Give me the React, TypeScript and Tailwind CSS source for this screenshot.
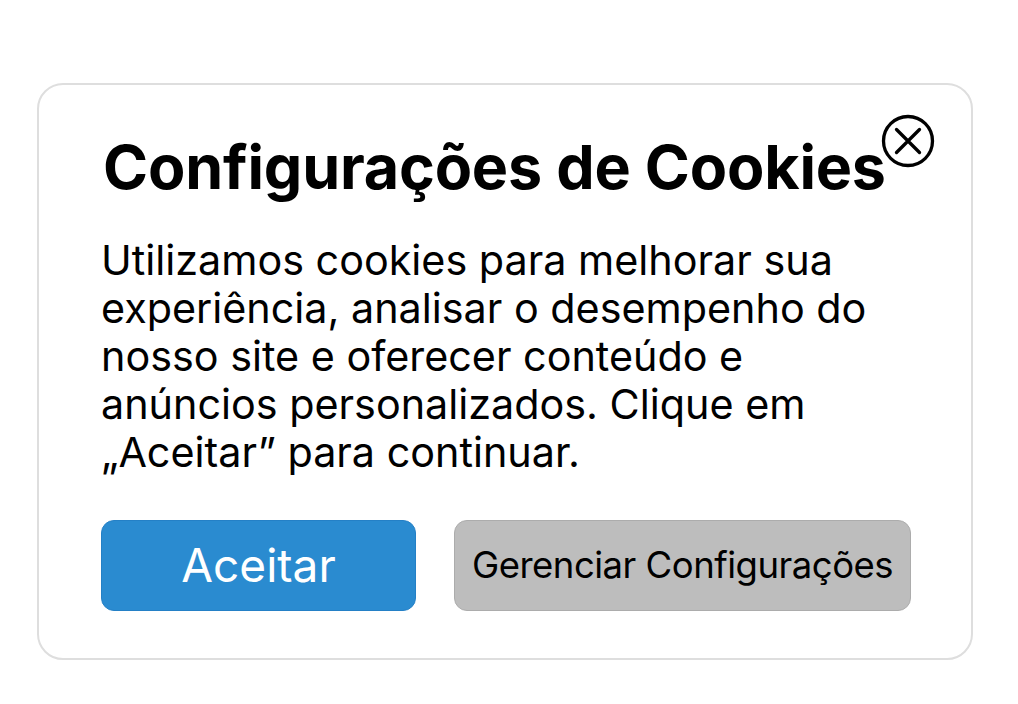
export default function App() {
  return (
    <div className="w-[1018px] h-[704px] bg-white pt-[83px] pl-[37px]" style={{ fontFamily: "Inter, 'Noto Sans', sans-serif" }}>
      <div className="relative w-[936px] h-[577px] rounded-[26px] border-2 border-[#dedede] bg-white pl-[62px] pr-[40px] flex flex-col">
        <h1 className="mt-[50px] text-[61px] leading-[64px] font-bold text-black ml-[2px] whitespace-nowrap tracking-[-0.2px]">Configurações de Cookies</h1>
        <button className="absolute left-[841px] top-[28px] w-[56px] h-[56px] flex items-center justify-center">
          <svg width="56" height="56" viewBox="0 0 56 56" fill="none" stroke="black" strokeWidth="3.3" strokeLinecap="round">
            <circle cx="28" cy="28" r="24.5" />
            <path d="M16.5 16.5 L39.5 39.5 M39.5 16.5 L16.5 39.5" />
          </svg>
        </button>
        <p className="mt-[37px] text-[41.3px] leading-[48px] text-black max-w-[790px]">
          Utilizamos cookies para melhorar sua experiência, analisar o desempenho do nosso site e oferecer conteúdo e anúncios personalizados. Clique em „Aceitar” para continuar.
        </p>
        <div className="mt-[44px] flex gap-[38px]">
          <button className="w-[315px] h-[91px] rounded-[13px] bg-[#2a8bd0] border border-[#2480c6] text-white text-[46px] flex items-center justify-center">Aceitar</button>
          <button className="w-[457px] h-[91px] rounded-[13px] bg-[#bdbdbd] border border-[#acacac] text-black text-[36.5px] flex items-center justify-center tracking-[-0.5px]">Gerenciar Configurações</button>
        </div>
      </div>
    </div>
  );
}
